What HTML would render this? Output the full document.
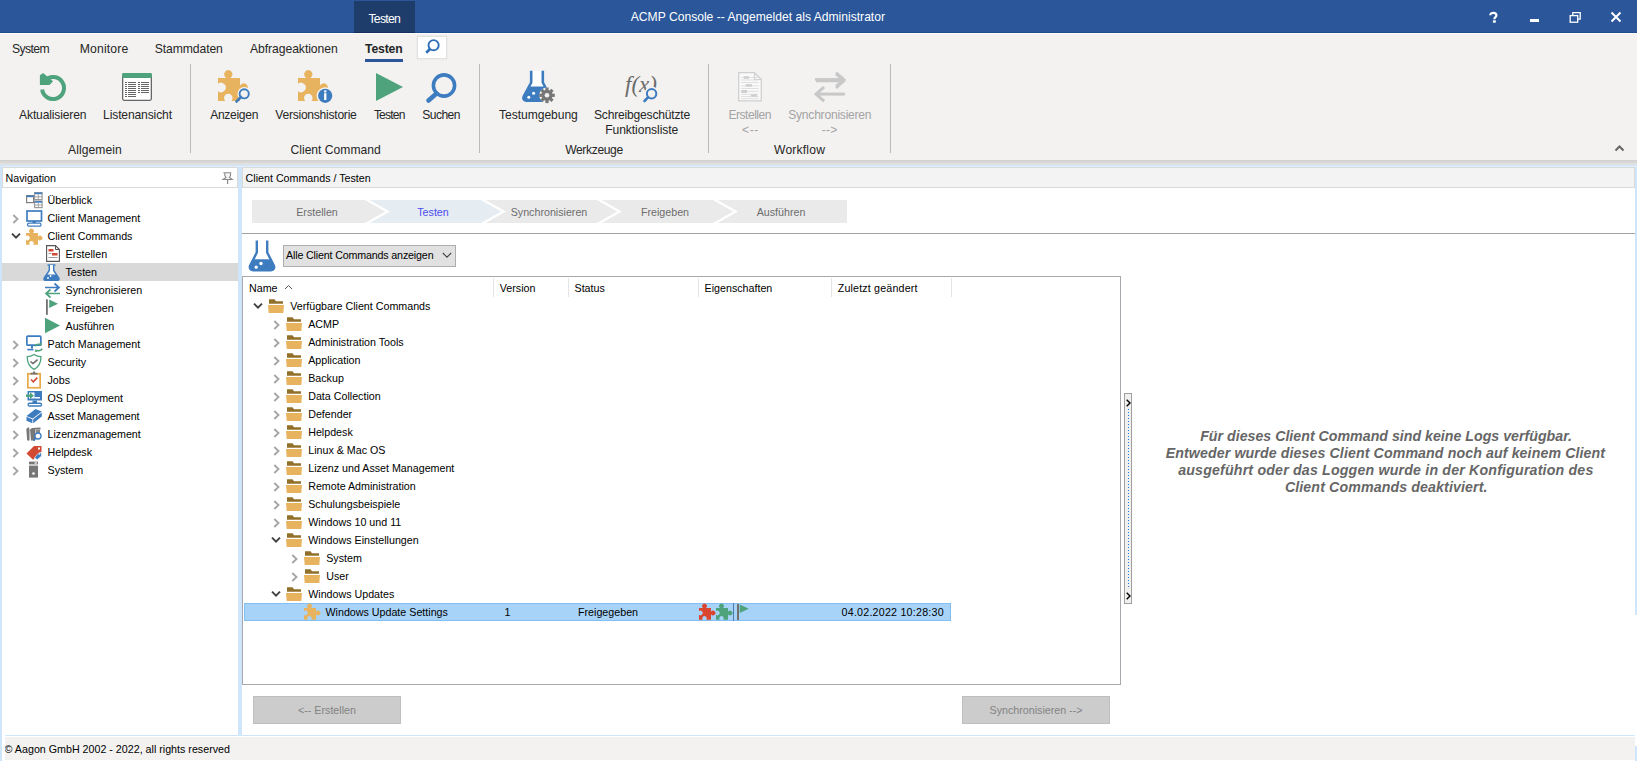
<!DOCTYPE html>
<html><head><meta charset="utf-8">
<style>
*{margin:0;padding:0;box-sizing:border-box}
html,body{width:1637px;height:761px;overflow:hidden;background:#fff;font-family:"Liberation Sans",sans-serif;color:#000}
.a{position:absolute}
svg.a{overflow:visible}
.t{position:absolute;white-space:nowrap;line-height:1}
</style></head><body>
<div class="a" style="left:0px;top:0px;width:1637px;height:33px;background:#2b579a"></div>
<div class="a" style="left:0px;top:32px;width:1637px;height:1px;background:#1f4c8e"></div>
<div class="a" style="left:354px;top:1px;width:61px;height:32px;background:#1f3d6b"></div>
<div class="a" style="left:354px;top:32px;width:61px;height:1px;background:#142f5c"></div>
<div class="t" style="left:368.40px;top:12.97px;font-size:12.2px;color:#fff;letter-spacing:-0.684px;">Testen</div>
<div class="t" style="left:630.80px;top:10.56px;font-size:12.1px;color:#fff;letter-spacing:0.008px;">ACMP Console -- Angemeldet als Administrator</div>
<svg class="a" style="left:1489px;top:12px" width="9" height="11" viewBox="0 0 9 11"><path d="M1.3 3.2C1.3 1.6 2.7 0.9 4.3 0.9C6.2 0.9 7.4 1.8 7.4 3.3C7.4 5.2 5.3 5.3 5.3 7.2" fill="none" stroke="#fff" stroke-width="2.2"/><rect x="3.9" y="8.3" width="2.9" height="2.4" fill="#fff"/></svg>
<div class="a" style="left:1530px;top:19px;width:9px;height:3px;background:#fff"></div>
<svg class="a" style="left:1569px;top:11px" width="13" height="12" viewBox="0 0 13 12"><rect x="1.2" y="4.6" width="7.5" height="6.6" fill="none" stroke="#fff" stroke-width="1.3"/><path d="M3.8 4.6V1.6H11.2V8.2H8.7" fill="none" stroke="#fff" stroke-width="1.3"/></svg>
<svg class="a" style="left:1610px;top:11px" width="12" height="12" viewBox="0 0 12 12"><path d="M1.5 1.5L10.5 10.5M10.5 1.5L1.5 10.5" stroke="#fff" stroke-width="2"/></svg>
<div class="a" style="left:0px;top:33px;width:1637px;height:127px;background:#f3f2f1"></div>
<div class="a" style="left:0px;top:33px;width:1637px;height:1px;background:#fdfdfb"></div>
<div class="a" style="left:0px;top:160px;width:1637px;height:5px;background:linear-gradient(#d0cfcd,#e4e4e4)"></div>
<div class="t" style="left:12.10px;top:43.27px;font-size:12.2px;color:#262626;letter-spacing:-0.628px;">System</div>
<div class="t" style="left:79.80px;top:43.27px;font-size:12.2px;color:#262626;letter-spacing:0.154px;">Monitore</div>
<div class="t" style="left:154.80px;top:43.27px;font-size:12.2px;color:#262626;letter-spacing:-0.112px;">Stammdaten</div>
<div class="t" style="left:249.90px;top:43.27px;font-size:12.2px;color:#262626;letter-spacing:-0.062px;">Abfrageaktionen</div>
<div class="t" style="left:365.10px;top:43.27px;font-size:12.2px;color:#262626;letter-spacing:-0.178px;font-weight:bold">Testen</div>
<div class="a" style="left:365px;top:59px;width:38px;height:3px;background:#2b579a"></div>
<div class="a" style="left:417px;top:35.5px;width:30px;height:23px;background:#fff;border:1px solid #e3e1df;box-shadow:0 0 1px #d8d6d4"></div>
<svg class="a" style="left:424px;top:38px" width="17" height="17" viewBox="0 0 17 17"><circle cx="9.6" cy="7.2" r="5.1" fill="none" stroke="#2f6fb5" stroke-width="1.9"/><path d="M6 11L2.2 14.8" stroke="#2f6fb5" stroke-width="2.7"/></svg>
<div class="a" style="left:190px;top:64px;width:1px;height:89px;background:#bdbbb8"></div>
<div class="a" style="left:479px;top:64px;width:1px;height:89px;background:#bdbbb8"></div>
<div class="a" style="left:708px;top:64px;width:1px;height:89px;background:#bdbbb8"></div>
<div class="a" style="left:890px;top:64px;width:1px;height:89px;background:#bdbbb8"></div>
<svg class="a" style="left:39px;top:72px" width="30" height="31" viewBox="0 0 30 31"><path d="M3.1 17.5A11 11 0 1 0 6.22 8.22" fill="none" stroke="#4ea37d" stroke-width="4"/><path d="M0.9 3.3L4.1 0.9L14 9.3L10.5 12.9L0.9 12.9Z" fill="#4ea37d"/></svg>
<svg class="a" style="left:122px;top:73px" width="30" height="28" viewBox="0 0 30 28"><rect x="0.65" y="0.65" width="28.7" height="26.7" rx="1.5" fill="#fff" stroke="#666" stroke-width="1.3"/><rect x="0" y="0" width="30" height="5" rx="1.5" fill="#4ea37d"/><rect x="3" y="9" width="2" height="1" fill="#666"/><rect x="6" y="9" width="8" height="1" fill="#666"/><rect x="3" y="11" width="2" height="1" fill="#666"/><rect x="6" y="11" width="8" height="1" fill="#666"/><rect x="3" y="13" width="2" height="1" fill="#666"/><rect x="6" y="13" width="8" height="1" fill="#666"/><rect x="3" y="15" width="2" height="1" fill="#666"/><rect x="6" y="15" width="8" height="1" fill="#666"/><rect x="3" y="17" width="2" height="1" fill="#666"/><rect x="6" y="17" width="8" height="1" fill="#666"/><rect x="3" y="19" width="2" height="1" fill="#666"/><rect x="6" y="19" width="8" height="1" fill="#666"/><rect x="3" y="21" width="2" height="1" fill="#666"/><rect x="6" y="21" width="8" height="1" fill="#666"/><rect x="3" y="23" width="2" height="1" fill="#666"/><rect x="6" y="23" width="8" height="1" fill="#666"/><rect x="16" y="9" width="2" height="1" fill="#666"/><rect x="19" y="9" width="8" height="1" fill="#666"/><rect x="16" y="11" width="2" height="1" fill="#666"/><rect x="19" y="11" width="8" height="1" fill="#666"/><rect x="16" y="13" width="2" height="1" fill="#666"/><rect x="19" y="13" width="8" height="1" fill="#666"/><rect x="16" y="15" width="2" height="1" fill="#666"/><rect x="19" y="15" width="8" height="1" fill="#666"/><rect x="16" y="17" width="2" height="1" fill="#666"/><rect x="19" y="17" width="8" height="1" fill="#666"/><rect x="16" y="19" width="2" height="1" fill="#666"/><rect x="19" y="19" width="8" height="1" fill="#666"/></svg>
<div class="t" style="left:19.10px;top:108.76px;font-size:12.1px;color:#262626;letter-spacing:-0.154px;">Aktualisieren</div>
<div class="t" style="left:103.10px;top:108.76px;font-size:12.1px;color:#262626;letter-spacing:-0.141px;">Listenansicht</div>
<div class="t" style="left:68.00px;top:143.56px;font-size:12.1px;color:#262626;letter-spacing:0.074px;">Allgemein</div>
<svg class="a" style="left:216px;top:70px" width="40" height="34" viewBox="0 0 40 34"><path d="M2 8H10.3A4.2 4.2 0 1 1 14.3 8H24V15.5A4.2 4.2 0 1 1 24 19.5V31H15.3A4.24 4.24 0 1 0 9.3 31H2V21.3A4.8 4.8 0 1 0 2 13.7Z" fill="#e8b35f"/><circle cx="28.2" cy="23.8" r="6.8" fill="#f3f2f1"/><circle cx="28.2" cy="23.8" r="4.6" fill="none" stroke="#3e7cc0" stroke-width="1.9"/><path d="M25 27L20.5 31.5" stroke="#3e7cc0" stroke-width="2.6" stroke-linecap="round"/></svg>
<div class="t" style="left:210.20px;top:108.76px;font-size:12.1px;color:#262626;letter-spacing:-0.320px;">Anzeigen</div>
<svg class="a" style="left:296px;top:70px" width="40" height="34" viewBox="0 0 40 34"><path d="M2 8H10.3A4.2 4.2 0 1 1 14.3 8H24V15.5A4.2 4.2 0 1 1 24 19.5V31H15.3A4.24 4.24 0 1 0 9.3 31H2V21.3A4.8 4.8 0 1 0 2 13.7Z" fill="#e8b35f"/><circle cx="29.2" cy="25.8" r="8.6" fill="#f3f2f1"/><circle cx="29.2" cy="25.8" r="7.1" fill="#3e7cc0"/><rect x="28.1" y="23.2" width="2.3" height="6.8" fill="#fff"/><rect x="28.1" y="20.4" width="2.3" height="2" fill="#fff"/></svg>
<div class="t" style="left:275.30px;top:108.76px;font-size:12.1px;color:#262626;letter-spacing:-0.258px;">Versionshistorie</div>
<svg class="a" style="left:376px;top:73px" width="28" height="28" viewBox="0 0 28 28"><path d="M0 0L27 14L0 28Z" fill="#4ea37d"/></svg>
<div class="t" style="left:373.90px;top:108.76px;font-size:12.1px;color:#262626;letter-spacing:-0.828px;">Testen</div>
<svg class="a" style="left:425px;top:71px" width="33" height="32" viewBox="0 0 33 32"><circle cx="19" cy="14.5" r="10.6" fill="none" stroke="#3e7cc0" stroke-width="3.6"/><path d="M11.5 22.5L3.5 29.5" stroke="#3e7cc0" stroke-width="4.6" stroke-linecap="round"/></svg>
<div class="t" style="left:422.30px;top:108.76px;font-size:12.1px;color:#262626;letter-spacing:-0.586px;">Suchen</div>
<div class="t" style="left:290.50px;top:143.56px;font-size:12.1px;color:#262626;letter-spacing:0.009px;">Client Command</div>
<svg class="a" style="left:520px;top:70px" width="38" height="34" viewBox="0 0 38 34"><path d="M11.2 0.8V12.5L3.8 26.3C2.9 28.3 4 30.6 6.2 30.6H27.8C30 30.6 31.1 28.3 30.2 26.3L22.8 12.5V0.8" fill="#fff" stroke="#3e7cc0" stroke-width="2.6"/><path d="M9.4 16.5H24.6L31.2 27C32 29 31 31.3 28.5 31.3H5.5C3 31.3 2 29 2.8 27Z" fill="#3e7cc0"/><circle cx="8.8" cy="27.2" r="1.5" fill="#fff"/><circle cx="13.6" cy="23.3" r="1.5" fill="#fff"/><g transform="translate(27,25.3)"><circle r="7.8" fill="#f3f2f1"/><circle r="5.6" fill="#777"/><circle r="2.3" fill="#f3f2f1"/><rect x="-1.6" y="-7.8" width="3.2" height="4" fill="#777" transform="rotate(0)"/><rect x="-1.6" y="-7.8" width="3.2" height="4" fill="#777" transform="rotate(45)"/><rect x="-1.6" y="-7.8" width="3.2" height="4" fill="#777" transform="rotate(90)"/><rect x="-1.6" y="-7.8" width="3.2" height="4" fill="#777" transform="rotate(135)"/><rect x="-1.6" y="-7.8" width="3.2" height="4" fill="#777" transform="rotate(180)"/><rect x="-1.6" y="-7.8" width="3.2" height="4" fill="#777" transform="rotate(225)"/><rect x="-1.6" y="-7.8" width="3.2" height="4" fill="#777" transform="rotate(270)"/><rect x="-1.6" y="-7.8" width="3.2" height="4" fill="#777" transform="rotate(315)"/></g></svg>
<div class="t" style="left:499.10px;top:108.76px;font-size:12.1px;color:#262626;letter-spacing:-0.059px;">Testumgebung</div>
<svg class="a" style="left:622px;top:70px" width="40" height="36" viewBox="0 0 40 36"><text x="3" y="21.5" font-family="Liberation Serif" font-style="italic" font-size="23" fill="#6b6b6b">f(x)</text><circle cx="29.6" cy="23.7" r="7.2" fill="#f3f2f1"/><circle cx="29.6" cy="23.7" r="4.7" fill="none" stroke="#3e7cc0" stroke-width="2"/><path d="M26.2 27.2L22.5 31" stroke="#3e7cc0" stroke-width="2.6" stroke-linecap="round"/></svg>
<div class="t" style="left:594.00px;top:108.76px;font-size:12.1px;color:#262626;letter-spacing:-0.206px;">Schreibgeschützte</div>
<div class="t" style="left:605.20px;top:123.56px;font-size:12.1px;color:#262626;letter-spacing:-0.066px;">Funktionsliste</div>
<div class="t" style="left:565.20px;top:143.56px;font-size:12.1px;color:#262626;letter-spacing:-0.369px;">Werkzeuge</div>
<svg class="a" style="left:738px;top:72px" width="24" height="30" viewBox="0 0 24 30"><path d="M0.7 0.7H16.5L23.3 7.5V28.8H0.7Z" fill="#f9f9f9" stroke="#d0d0d0" stroke-width="1.3"/><path d="M16.5 0.7V7.5H23.3" fill="none" stroke="#d0d0d0" stroke-width="1.2"/><rect x="3.2" y="5.0" width="17.4" height="0.8" fill="#dadada"/><rect x="3.2" y="7.6" width="17.4" height="0.8" fill="#dadada"/><rect x="3.2" y="10.2" width="17.4" height="0.8" fill="#dadada"/><rect x="3.2" y="13.4" width="17.4" height="0.8" fill="#dadada"/><rect x="3.2" y="16.0" width="17.4" height="0.8" fill="#dadada"/><rect x="3.2" y="18.9" width="17.4" height="0.8" fill="#dadada"/><rect x="3.2" y="21.8" width="17.4" height="0.8" fill="#dadada"/><rect x="3.2" y="24.1" width="17.4" height="0.8" fill="#dadada"/><rect x="3.2" y="26.3" width="17.4" height="0.8" fill="#dadada"/><rect x="5.8" y="4.2" width="5.2" height="2.5" fill="#cfcfcf"/><rect x="7.7" y="12.1" width="6.2" height="2.6" fill="#cfcfcf"/><rect x="3.2" y="18.0" width="5.8" height="2.9" fill="#cfcfcf"/><rect x="12.9" y="22.2" width="6.1" height="2.5" fill="#cfcfcf"/></svg>
<svg class="a" style="left:813px;top:70px" width="34" height="34" viewBox="0 0 34 34"><path d="M2 9.4H31M23 2.5L31 9.4L23 16.3M32 24.2H3M11 17.3L3 24.2L11 31.1" fill="none" stroke="#cbcbcb" stroke-width="2.8"/></svg>
<div class="t" style="left:728.40px;top:108.76px;font-size:12.1px;color:#a3a3a3;letter-spacing:-0.495px;">Erstellen</div>
<div class="t" style="left:741.90px;top:123.56px;font-size:12.1px;color:#a3a3a3;letter-spacing:0.688px;">&lt;--</div>
<svg class="a" style="left:813px;top:72px" width="34" height="30" viewBox="0 0 34 30"><path d="M3 9h28M23 2l8 7-8 7M31 22H3M11 15l-8 7 8 7" fill="none" stroke="#c8c8c8" stroke-width="2.5"/></svg>
<div class="t" style="left:788.20px;top:108.76px;font-size:12.1px;color:#a3a3a3;letter-spacing:-0.237px;">Synchronisieren</div>
<div class="t" style="left:821.70px;top:123.56px;font-size:12.1px;color:#a3a3a3;letter-spacing:0.287px;">--&gt;</div>
<div class="t" style="left:774.00px;top:143.56px;font-size:12.1px;color:#262626;letter-spacing:0.198px;">Workflow</div>
<svg class="a" style="left:1614px;top:144px" width="12" height="8" viewBox="0 0 12 8"><path d="M1.5 6.5L5.5 2.5L9.5 6.5" fill="none" stroke="#666" stroke-width="2"/></svg>
<div class="a" style="left:0px;top:165px;width:1637px;height:570px;background:#cfe6fa"></div>
<div class="a" style="left:0px;top:166px;width:1637px;height:1px;background:#e3f0fc"></div>
<div class="a" style="left:2px;top:167px;width:236px;height:568px;background:#fff"></div>
<div class="a" style="left:2px;top:167px;width:236px;height:21px;background:#fff;border:1px solid #d9d9d9"></div>
<div class="t" style="left:5.5px;top:172.74px;font-size:10.7px;color:#000;">Navigation</div>
<svg class="a" style="left:222px;top:172px" width="11" height="13" viewBox="0 0 11 13"><path d="M1.3 0.8H9.2M2.8 1V3.5L4 5.5L1 7.5H10.2L7.5 5.5L8.5 3.5V1" fill="#f4f4f4" stroke="#8a8a8a" stroke-width="1.1"/><path d="M5.6 7.5V12" stroke="#8a8a8a" stroke-width="1.2"/></svg>
<div class="a" style="left:242px;top:167px;width:1393px;height:568px;background:#fff"></div>
<div class="a" style="left:242px;top:167px;width:1393px;height:21px;background:#f3f3f3;border:1px solid #d9d9d9"></div>
<div class="t" style="left:245.6px;top:172.74px;font-size:10.7px;color:#000;">Client Commands / Testen</div>
<div class="a" style="left:2px;top:263px;width:236px;height:18px;background:#d9d9d9"></div>
<svg class="a" style="left:26px;top:192px" width="17" height="16" viewBox="0 0 17 16"><rect x="0.6" y="3.6" width="7" height="7" fill="none" stroke="#808080" stroke-width="1.2"/><rect x="0.6" y="3.6" width="7" height="1.6" fill="#3e7cc0"/><rect x="8.6" y="0.6" width="7.5" height="7" fill="#fff" stroke="#9a9a9a" stroke-width="1.2"/><rect x="8.6" y="0.6" width="7.5" height="1.6" fill="#3e7cc0"/><path d="M12.3 2v5.5M9 4.8h7" stroke="#9a9a9a" stroke-width="0.9"/><rect x="8.6" y="9.1" width="7.5" height="6.5" fill="#fff" stroke="#9a9a9a" stroke-width="1.2"/><rect x="8.6" y="9.1" width="7.5" height="1.6" fill="#3e7cc0"/><path d="M12.3 10.5v5M9 13h7" stroke="#9a9a9a" stroke-width="0.9"/></svg>
<div class="t" style="left:47.5px;top:194.94px;font-size:10.7px;color:#000;">Überblick</div>
<svg class="a" style="left:12px;top:214px" width="7" height="10" viewBox="0 0 7 10"><path d="M1.3 1L5.5 5L1.3 9" fill="none" stroke="#a6a6a6" stroke-width="1.9"/></svg>
<svg class="a" style="left:26px;top:210px" width="17" height="17" viewBox="0 0 17 17"><rect x="1" y="1" width="14.5" height="10" fill="none" stroke="#3e7cc0" stroke-width="1.7"/><rect x="6.5" y="11" width="3.5" height="2" fill="#3e7cc0"/><rect x="1.6" y="13.2" width="13.3" height="3" rx="1" fill="none" stroke="#3e7cc0" stroke-width="1.2"/></svg>
<div class="t" style="left:47.5px;top:212.94px;font-size:10.7px;color:#000;">Client Management</div>
<svg class="a" style="left:11px;top:233px" width="10" height="7" viewBox="0 0 10 7"><path d="M1 0.6L5 4.6L9 0.6" fill="none" stroke="#404040" stroke-width="1.9"/></svg>
<svg class="a" style="left:26px;top:229px" width="17" height="17" viewBox="0 0 17 17"><path d="M0 4H4.2A2.39 2.39 0 1 1 6.8 4H12V7.7A2.39 2.39 0 1 1 12 10.3V15.8H7.2A2.27 2.27 0 1 0 3.8 15.8H0V10.7A2.27 2.27 0 1 0 0 7.3Z" fill="#e8b35f"/></svg>
<div class="t" style="left:47.5px;top:230.94px;font-size:10.7px;color:#000;">Client Commands</div>
<svg class="a" style="left:46px;top:245px" width="14" height="17" viewBox="0 0 14 17"><path d="M0.6 0.6H9.5L13.4 4.5V16.4H0.6Z" fill="#fff" stroke="#555" stroke-width="1.1"/><path d="M9.5 0.6V4.5H13.4" fill="none" stroke="#555" stroke-width="1"/><rect x="2.5" y="4" width="5" height="2.5" fill="#d24a33"/><rect x="2.5" y="8" width="3" height="1" fill="#999"/><rect x="6" y="8" width="5.5" height="2.5" fill="#d24a33"/><rect x="2.5" y="12" width="9" height="1" fill="#999"/></svg>
<div class="t" style="left:65.5px;top:248.94px;font-size:10.7px;color:#000;">Erstellen</div>
<svg class="a" style="left:43px;top:264px" width="17" height="17" viewBox="0 0 17 17"><path d="M4.5 1H12.5" stroke="#3e7cc0" stroke-width="1.4"/><path d="M6.3 1V6.5L1.2 14.2C0.6 15.3 1.2 16.2 2.3 16.2H14.7C15.8 16.2 16.4 15.3 15.8 14.2L10.7 6.5V1" fill="#fff" stroke="#3e7cc0" stroke-width="1.5"/><path d="M3.2 10.5H13.8L16 14.4C16.3 15.5 15.8 16.4 14.7 16.4H2.3C1.2 16.4 .7 15.5 1 14.4Z" fill="#3e7cc0"/><circle cx="5" cy="14" r="0.9" fill="#fff"/><circle cx="7.6" cy="12" r="0.9" fill="#fff"/></svg>
<div class="t" style="left:65.5px;top:266.94px;font-size:10.7px;color:#000;">Testen</div>
<svg class="a" style="left:44px;top:282px" width="17" height="16" viewBox="0 0 17 16"><path d="M1 5.5H15M10.5 1.5L15 5.5L10.5 9.5" fill="none" stroke="#3e7cc0" stroke-width="1.7"/><path d="M16 11.5H2M6.5 7.5L2 11.5L6.5 15.5" fill="none" stroke="#4ea37d" stroke-width="1.7"/></svg>
<div class="t" style="left:65.5px;top:284.94px;font-size:10.7px;color:#000;">Synchronisieren</div>
<svg class="a" style="left:45px;top:299px" width="14" height="18" viewBox="0 0 14 18"><rect x="1" y="0.3" width="1.8" height="15.5" fill="#707070"/><path d="M4.2 0.6L13 4.8L4.2 9Z" fill="#4ea37d"/></svg>
<div class="t" style="left:65.5px;top:302.94px;font-size:10.7px;color:#000;">Freigeben</div>
<svg class="a" style="left:45px;top:318px" width="16" height="16" viewBox="0 0 16 16"><path d="M0 -0.2L15 7.5L0 15.2Z" fill="#4ea37d"/></svg>
<div class="t" style="left:65.5px;top:320.94px;font-size:10.7px;color:#000;">Ausführen</div>
<svg class="a" style="left:12px;top:340px" width="7" height="10" viewBox="0 0 7 10"><path d="M1.3 1L5.5 5L1.3 9" fill="none" stroke="#a6a6a6" stroke-width="1.9"/></svg>
<svg class="a" style="left:26px;top:335px" width="17" height="18" viewBox="0 0 17 18"><rect x="0.85" y="1.05" width="14" height="9.1" rx="1" fill="none" stroke="#3e7cc0" stroke-width="1.7"/><rect x="5" y="10.5" width="2" height="3" fill="#3e7cc0"/><path d="M1.3 14.6H7.5" stroke="#3e7cc0" stroke-width="1.6"/><path d="M8.6 11.3C9.5 9.5 12.5 8.6 14.6 9.8" fill="none" stroke="#4ea37d" stroke-width="1.5"/><path d="M13.2 7.8L16 8.2L15.3 11Z" fill="#4ea37d"/><path d="M16.2 13.6C15.3 15.4 12.3 16.3 10.2 15.1" fill="none" stroke="#4ea37d" stroke-width="1.5"/><path d="M11.6 17.1L8.8 16.7L9.5 13.9Z" fill="#4ea37d"/></svg>
<div class="t" style="left:47.5px;top:338.94px;font-size:10.7px;color:#000;">Patch Management</div>
<svg class="a" style="left:12px;top:358px" width="7" height="10" viewBox="0 0 7 10"><path d="M1.3 1L5.5 5L1.3 9" fill="none" stroke="#a6a6a6" stroke-width="1.9"/></svg>
<svg class="a" style="left:26px;top:353px" width="17" height="18" viewBox="0 0 17 18"><path d="M8.1 1.5C10 2.8 12.4 3.6 15 3.6C15 10.5 12.5 14.2 8.1 16.4C3.7 14.2 1.2 10.5 1.2 3.6C3.8 3.6 6.2 2.8 8.1 1.5Z" fill="#fff" stroke="#4ea37d" stroke-width="1.3"/><path d="M4.5 8.5L7 10.6L11.5 6.6" fill="none" stroke="#666" stroke-width="1.5"/></svg>
<div class="t" style="left:47.5px;top:356.94px;font-size:10.7px;color:#000;">Security</div>
<svg class="a" style="left:12px;top:376px" width="7" height="10" viewBox="0 0 7 10"><path d="M1.3 1L5.5 5L1.3 9" fill="none" stroke="#a6a6a6" stroke-width="1.9"/></svg>
<svg class="a" style="left:26px;top:371px" width="17" height="18" viewBox="0 0 17 18"><rect x="1.85" y="2.75" width="12.3" height="14" fill="#fff" stroke="#e8a94a" stroke-width="1.7"/><path d="M4 3.5L5 1.8H11L12 3.5Z" fill="#777"/><rect x="7" y="0.5" width="2" height="1.6" fill="#777"/><path d="M5 8.5L7.3 10.8L11.3 6.6" fill="none" stroke="#d24a33" stroke-width="1.6"/></svg>
<div class="t" style="left:47.5px;top:374.94px;font-size:10.7px;color:#000;">Jobs</div>
<svg class="a" style="left:12px;top:394px" width="7" height="10" viewBox="0 0 7 10"><path d="M1.3 1L5.5 5L1.3 9" fill="none" stroke="#a6a6a6" stroke-width="1.9"/></svg>
<svg class="a" style="left:26px;top:390px" width="17" height="17" viewBox="0 0 17 17"><path d="M1.5 1H16V10.5H1.5Z" fill="#3e7cc0"/><rect x="3" y="2.5" width="5.5" height="6" fill="#fff"/><rect x="8.5" y="7" width="5.5" height="1.5" fill="#fff"/><rect x="6.5" y="10.5" width="4.5" height="3" fill="#3e7cc0"/><rect x="2.2" y="13.2" width="13.3" height="2.8" rx="1.2" fill="#fff" stroke="#3e7cc0" stroke-width="1.4"/><path d="M0 5.7H5" stroke="#4ea37d" stroke-width="2.5"/><path d="M4 2.3L8 5.7L4 9.1Z" fill="#4ea37d"/></svg>
<div class="t" style="left:47.5px;top:392.94px;font-size:10.7px;color:#000;">OS Deployment</div>
<svg class="a" style="left:12px;top:412px" width="7" height="10" viewBox="0 0 7 10"><path d="M1.3 1L5.5 5L1.3 9" fill="none" stroke="#a6a6a6" stroke-width="1.9"/></svg>
<svg class="a" style="left:26px;top:408px" width="17" height="17" viewBox="0 0 17 17"><path d="M0.5 8L9.5 1L15.8 3.6L6.8 10.6Z" fill="#3e7cc0"/><path d="M0.5 8.8L6.4 11.3V15.3L0.5 12.8Z" fill="#3e7cc0"/><path d="M7.2 11.2L15.8 4.4V8.4L7.2 15.3Z" fill="#3e7cc0"/></svg>
<div class="t" style="left:47.5px;top:410.94px;font-size:10.7px;color:#000;">Asset Management</div>
<svg class="a" style="left:12px;top:430px" width="7" height="10" viewBox="0 0 7 10"><path d="M1.3 1L5.5 5L1.3 9" fill="none" stroke="#a6a6a6" stroke-width="1.9"/></svg>
<svg class="a" style="left:26px;top:426px" width="17" height="17" viewBox="0 0 17 17"><path d="M0.3 3L2.3 1L3.5 3V14.5H1.2Z" fill="#777"/><path d="M4 3.5L6 2L14.5 1.5V3.5L9 3.6V14.5H5Z" fill="#777"/><path d="M9.5 3.6H14V7H9.5Z" fill="#8a8a8a"/><circle cx="12" cy="10" r="3" fill="#fff" stroke="#3e7cc0" stroke-width="1.3"/><path d="M9.7 12.3L7.7 14.8" stroke="#3e7cc0" stroke-width="1.6"/></svg>
<div class="t" style="left:47.5px;top:428.94px;font-size:10.7px;color:#000;">Lizenzmanagement</div>
<svg class="a" style="left:12px;top:448px" width="7" height="10" viewBox="0 0 7 10"><path d="M1.3 1L5.5 5L1.3 9" fill="none" stroke="#a6a6a6" stroke-width="1.9"/></svg>
<svg class="a" style="left:26px;top:444px" width="17" height="17" viewBox="0 0 17 17"><path d="M0.5 9.5L8 2H15.5V7.5L7 15.8Z" fill="#d24a33"/><rect x="12" y="3.5" width="2" height="2" fill="#fff"/><path d="M8.5 13.5L13.2 8.5L15.5 9V12L11.3 15.8Z" fill="#3e7cc0" stroke="#fff" stroke-width="0.6"/><circle cx="13.5" cy="10" r="0.8" fill="#fff"/></svg>
<div class="t" style="left:47.5px;top:446.94px;font-size:10.7px;color:#000;">Helpdesk</div>
<svg class="a" style="left:12px;top:466px" width="7" height="10" viewBox="0 0 7 10"><path d="M1.3 1L5.5 5L1.3 9" fill="none" stroke="#a6a6a6" stroke-width="1.9"/></svg>
<svg class="a" style="left:28px;top:461px" width="14" height="18" viewBox="0 0 14 18"><rect x="1" y="0.6" width="9" height="2.8" fill="#777"/><rect x="6.5" y="1.4" width="2.5" height="1.2" fill="#fff"/><rect x="1" y="4.6" width="9" height="12" fill="#777"/><circle cx="5.5" cy="12.5" r="1.3" fill="#fff"/></svg>
<div class="t" style="left:47.5px;top:464.94px;font-size:10.7px;color:#000;">System</div>
<svg class="a" style="left:252px;top:200px" width="595" height="23" viewBox="0 0 595 23"><rect x="0" y="0" width="595" height="23" fill="#eaeaea"/><path d="M113 0H229L249.5 11.5L229 23H113L133.5 11.5Z" fill="#e5edf3"/><path d="M113 -1.2L135.65 11.5L113 24.2" fill="none" stroke="#fff" stroke-width="2.2"/><path d="M229 -1.2L251.65 11.5L229 24.2" fill="none" stroke="#fff" stroke-width="2.2"/><path d="M345 -1.2L367.65 11.5L345 24.2" fill="none" stroke="#fff" stroke-width="2.2"/><path d="M461 -1.2L483.65 11.5L461 24.2" fill="none" stroke="#fff" stroke-width="2.2"/></svg>
<div class="a" style="left:252px;top:197px;width:600px;height:3px;background:#fff"></div>
<div class="a" style="left:252px;top:223px;width:600px;height:3px;background:#fff"></div>
<div class="t" style="left:-183px;width:1000px;text-align:center;top:206.94px;font-size:10.7px;color:#6d6d6d;">Erstellen</div>
<div class="t" style="left:-67px;width:1000px;text-align:center;top:206.94px;font-size:10.7px;color:#4b4bef;">Testen</div>
<div class="t" style="left:49px;width:1000px;text-align:center;top:206.94px;font-size:10.7px;color:#6d6d6d;">Synchronisieren</div>
<div class="t" style="left:165px;width:1000px;text-align:center;top:206.94px;font-size:10.7px;color:#6d6d6d;">Freigeben</div>
<div class="t" style="left:281px;width:1000px;text-align:center;top:206.94px;font-size:10.7px;color:#6d6d6d;">Ausführen</div>
<div class="a" style="left:242px;top:233px;width:1393px;height:1px;background:#a0a0a0"></div>
<svg class="a" style="left:248px;top:240px" width="29" height="32" viewBox="0 0 29 32"><path d="M8.8 0.5V12.5L2.2 25.5C1.2 27.8 2.3 30.2 5 30.2H23C25.7 30.2 26.8 27.8 25.8 25.5L19.2 12.5V0.5" fill="#fff" stroke="#3e7cc0" stroke-width="2.4"/><path d="M5.6 19.3H22.4L26.6 26C27.6 28.5 26.2 30.8 23.5 30.8H4.5C1.8 30.8 .4 28.5 1.4 26Z" fill="#3e7cc0"/><circle cx="8.2" cy="27.2" r="1.6" fill="#fff"/><circle cx="13" cy="23.5" r="1.7" fill="#fff"/></svg>
<div class="a" style="left:283px;top:245px;width:173px;height:22px;background:#e1e1e1;border:1px solid #adadad"></div>
<div class="t" style="left:286px;top:250.44px;font-size:10.7px;color:#000;letter-spacing:-0.16px">Alle Client Commands anzeigen</div>
<svg class="a" style="left:442px;top:252px" width="10" height="8" viewBox="0 0 10 8"><path d="M0.8 1L5 5.2L9.2 1" fill="none" stroke="#444" stroke-width="1.1"/></svg>
<div class="a" style="left:242px;top:276px;width:879px;height:409px;background:#fff;border:1px solid #a7a7ad"></div>
<div class="a" style="left:493px;top:278px;width:1px;height:19px;background:#e5e5e5"></div>
<div class="a" style="left:568px;top:278px;width:1px;height:19px;background:#e5e5e5"></div>
<div class="a" style="left:698px;top:278px;width:1px;height:19px;background:#e5e5e5"></div>
<div class="a" style="left:831px;top:278px;width:1px;height:19px;background:#e5e5e5"></div>
<div class="a" style="left:951px;top:278px;width:1px;height:19px;background:#e5e5e5"></div>
<div class="t" style="left:249px;top:282.74px;font-size:10.7px;color:#000;">Name</div>
<svg class="a" style="left:284px;top:284px" width="9" height="6" viewBox="0 0 9 6"><path d="M1 5L4.5 1.5L8 5" fill="none" stroke="#555" stroke-width="1"/></svg>
<div class="t" style="left:499.8px;top:282.74px;font-size:10.7px;color:#000;">Version</div>
<div class="t" style="left:574.5px;top:282.74px;font-size:10.7px;color:#000;">Status</div>
<div class="t" style="left:704.60px;top:282.74px;font-size:10.7px;color:#000;letter-spacing:-0.004px;">Eigenschaften</div>
<div class="t" style="left:837.70px;top:282.74px;font-size:10.7px;color:#000;letter-spacing:0.171px;">Zuletzt geändert</div>
<div class="a" style="left:244px;top:603px;width:707px;height:18px;background:#a8d3f9;border:1px solid #83bff2"></div>
<svg class="a" style="left:253px;top:303px" width="10" height="7" viewBox="0 0 10 7"><path d="M1 0.6L5 4.6L9 0.6" fill="none" stroke="#404040" stroke-width="1.9"/></svg>
<svg class="a" style="left:268px;top:299px" width="16" height="14" viewBox="0 0 16 14"><path d="M1 0.3H6.5L8 2.3H15V4.8H1Z" fill="#93702a"/><path d="M0 6H16L15.3 14H0.7Z" fill="#e8b35f"/></svg>
<div class="t" style="left:290.2px;top:301.04px;font-size:10.7px;color:#000;">Verfügbare Client Commands</div>
<svg class="a" style="left:273px;top:320px" width="7" height="10" viewBox="0 0 7 10"><path d="M1.3 1L5.5 5L1.3 9" fill="none" stroke="#a6a6a6" stroke-width="1.9"/></svg>
<svg class="a" style="left:286px;top:317px" width="16" height="14" viewBox="0 0 16 14"><path d="M1 0.3H6.5L8 2.3H15V4.8H1Z" fill="#93702a"/><path d="M0 6H16L15.3 14H0.7Z" fill="#e8b35f"/></svg>
<div class="t" style="left:308.2px;top:319.04px;font-size:10.7px;color:#000;">ACMP</div>
<svg class="a" style="left:273px;top:338px" width="7" height="10" viewBox="0 0 7 10"><path d="M1.3 1L5.5 5L1.3 9" fill="none" stroke="#a6a6a6" stroke-width="1.9"/></svg>
<svg class="a" style="left:286px;top:335px" width="16" height="14" viewBox="0 0 16 14"><path d="M1 0.3H6.5L8 2.3H15V4.8H1Z" fill="#93702a"/><path d="M0 6H16L15.3 14H0.7Z" fill="#e8b35f"/></svg>
<div class="t" style="left:308.2px;top:337.04px;font-size:10.7px;color:#000;">Administration Tools</div>
<svg class="a" style="left:273px;top:356px" width="7" height="10" viewBox="0 0 7 10"><path d="M1.3 1L5.5 5L1.3 9" fill="none" stroke="#a6a6a6" stroke-width="1.9"/></svg>
<svg class="a" style="left:286px;top:353px" width="16" height="14" viewBox="0 0 16 14"><path d="M1 0.3H6.5L8 2.3H15V4.8H1Z" fill="#93702a"/><path d="M0 6H16L15.3 14H0.7Z" fill="#e8b35f"/></svg>
<div class="t" style="left:308.2px;top:355.04px;font-size:10.7px;color:#000;">Application</div>
<svg class="a" style="left:273px;top:374px" width="7" height="10" viewBox="0 0 7 10"><path d="M1.3 1L5.5 5L1.3 9" fill="none" stroke="#a6a6a6" stroke-width="1.9"/></svg>
<svg class="a" style="left:286px;top:371px" width="16" height="14" viewBox="0 0 16 14"><path d="M1 0.3H6.5L8 2.3H15V4.8H1Z" fill="#93702a"/><path d="M0 6H16L15.3 14H0.7Z" fill="#e8b35f"/></svg>
<div class="t" style="left:308.2px;top:373.04px;font-size:10.7px;color:#000;">Backup</div>
<svg class="a" style="left:273px;top:392px" width="7" height="10" viewBox="0 0 7 10"><path d="M1.3 1L5.5 5L1.3 9" fill="none" stroke="#a6a6a6" stroke-width="1.9"/></svg>
<svg class="a" style="left:286px;top:389px" width="16" height="14" viewBox="0 0 16 14"><path d="M1 0.3H6.5L8 2.3H15V4.8H1Z" fill="#93702a"/><path d="M0 6H16L15.3 14H0.7Z" fill="#e8b35f"/></svg>
<div class="t" style="left:308.2px;top:391.04px;font-size:10.7px;color:#000;">Data Collection</div>
<svg class="a" style="left:273px;top:410px" width="7" height="10" viewBox="0 0 7 10"><path d="M1.3 1L5.5 5L1.3 9" fill="none" stroke="#a6a6a6" stroke-width="1.9"/></svg>
<svg class="a" style="left:286px;top:407px" width="16" height="14" viewBox="0 0 16 14"><path d="M1 0.3H6.5L8 2.3H15V4.8H1Z" fill="#93702a"/><path d="M0 6H16L15.3 14H0.7Z" fill="#e8b35f"/></svg>
<div class="t" style="left:308.2px;top:409.04px;font-size:10.7px;color:#000;">Defender</div>
<svg class="a" style="left:273px;top:428px" width="7" height="10" viewBox="0 0 7 10"><path d="M1.3 1L5.5 5L1.3 9" fill="none" stroke="#a6a6a6" stroke-width="1.9"/></svg>
<svg class="a" style="left:286px;top:425px" width="16" height="14" viewBox="0 0 16 14"><path d="M1 0.3H6.5L8 2.3H15V4.8H1Z" fill="#93702a"/><path d="M0 6H16L15.3 14H0.7Z" fill="#e8b35f"/></svg>
<div class="t" style="left:308.2px;top:427.04px;font-size:10.7px;color:#000;">Helpdesk</div>
<svg class="a" style="left:273px;top:446px" width="7" height="10" viewBox="0 0 7 10"><path d="M1.3 1L5.5 5L1.3 9" fill="none" stroke="#a6a6a6" stroke-width="1.9"/></svg>
<svg class="a" style="left:286px;top:443px" width="16" height="14" viewBox="0 0 16 14"><path d="M1 0.3H6.5L8 2.3H15V4.8H1Z" fill="#93702a"/><path d="M0 6H16L15.3 14H0.7Z" fill="#e8b35f"/></svg>
<div class="t" style="left:308.2px;top:445.04px;font-size:10.7px;color:#000;">Linux &amp; Mac OS</div>
<svg class="a" style="left:273px;top:464px" width="7" height="10" viewBox="0 0 7 10"><path d="M1.3 1L5.5 5L1.3 9" fill="none" stroke="#a6a6a6" stroke-width="1.9"/></svg>
<svg class="a" style="left:286px;top:461px" width="16" height="14" viewBox="0 0 16 14"><path d="M1 0.3H6.5L8 2.3H15V4.8H1Z" fill="#93702a"/><path d="M0 6H16L15.3 14H0.7Z" fill="#e8b35f"/></svg>
<div class="t" style="left:308.2px;top:463.04px;font-size:10.7px;color:#000;">Lizenz und Asset Management</div>
<svg class="a" style="left:273px;top:482px" width="7" height="10" viewBox="0 0 7 10"><path d="M1.3 1L5.5 5L1.3 9" fill="none" stroke="#a6a6a6" stroke-width="1.9"/></svg>
<svg class="a" style="left:286px;top:479px" width="16" height="14" viewBox="0 0 16 14"><path d="M1 0.3H6.5L8 2.3H15V4.8H1Z" fill="#93702a"/><path d="M0 6H16L15.3 14H0.7Z" fill="#e8b35f"/></svg>
<div class="t" style="left:308.2px;top:481.04px;font-size:10.7px;color:#000;">Remote Administration</div>
<svg class="a" style="left:273px;top:500px" width="7" height="10" viewBox="0 0 7 10"><path d="M1.3 1L5.5 5L1.3 9" fill="none" stroke="#a6a6a6" stroke-width="1.9"/></svg>
<svg class="a" style="left:286px;top:497px" width="16" height="14" viewBox="0 0 16 14"><path d="M1 0.3H6.5L8 2.3H15V4.8H1Z" fill="#93702a"/><path d="M0 6H16L15.3 14H0.7Z" fill="#e8b35f"/></svg>
<div class="t" style="left:308.2px;top:499.04px;font-size:10.7px;color:#000;">Schulungsbeispiele</div>
<svg class="a" style="left:273px;top:518px" width="7" height="10" viewBox="0 0 7 10"><path d="M1.3 1L5.5 5L1.3 9" fill="none" stroke="#a6a6a6" stroke-width="1.9"/></svg>
<svg class="a" style="left:286px;top:515px" width="16" height="14" viewBox="0 0 16 14"><path d="M1 0.3H6.5L8 2.3H15V4.8H1Z" fill="#93702a"/><path d="M0 6H16L15.3 14H0.7Z" fill="#e8b35f"/></svg>
<div class="t" style="left:308.2px;top:517.04px;font-size:10.7px;color:#000;">Windows 10 und 11</div>
<svg class="a" style="left:271px;top:537px" width="10" height="7" viewBox="0 0 10 7"><path d="M1 0.6L5 4.6L9 0.6" fill="none" stroke="#404040" stroke-width="1.9"/></svg>
<svg class="a" style="left:286px;top:533px" width="16" height="14" viewBox="0 0 16 14"><path d="M1 0.3H6.5L8 2.3H15V4.8H1Z" fill="#93702a"/><path d="M0 6H16L15.3 14H0.7Z" fill="#e8b35f"/></svg>
<div class="t" style="left:308.2px;top:535.04px;font-size:10.7px;color:#000;">Windows Einstellungen</div>
<svg class="a" style="left:291px;top:554px" width="7" height="10" viewBox="0 0 7 10"><path d="M1.3 1L5.5 5L1.3 9" fill="none" stroke="#a6a6a6" stroke-width="1.9"/></svg>
<svg class="a" style="left:304px;top:551px" width="16" height="14" viewBox="0 0 16 14"><path d="M1 0.3H6.5L8 2.3H15V4.8H1Z" fill="#93702a"/><path d="M0 6H16L15.3 14H0.7Z" fill="#e8b35f"/></svg>
<div class="t" style="left:326.2px;top:553.04px;font-size:10.7px;color:#000;">System</div>
<svg class="a" style="left:291px;top:572px" width="7" height="10" viewBox="0 0 7 10"><path d="M1.3 1L5.5 5L1.3 9" fill="none" stroke="#a6a6a6" stroke-width="1.9"/></svg>
<svg class="a" style="left:304px;top:569px" width="16" height="14" viewBox="0 0 16 14"><path d="M1 0.3H6.5L8 2.3H15V4.8H1Z" fill="#93702a"/><path d="M0 6H16L15.3 14H0.7Z" fill="#e8b35f"/></svg>
<div class="t" style="left:326.2px;top:571.04px;font-size:10.7px;color:#000;">User</div>
<svg class="a" style="left:271px;top:591px" width="10" height="7" viewBox="0 0 10 7"><path d="M1 0.6L5 4.6L9 0.6" fill="none" stroke="#404040" stroke-width="1.9"/></svg>
<svg class="a" style="left:286px;top:587px" width="16" height="14" viewBox="0 0 16 14"><path d="M1 0.3H6.5L8 2.3H15V4.8H1Z" fill="#93702a"/><path d="M0 6H16L15.3 14H0.7Z" fill="#e8b35f"/></svg>
<div class="t" style="left:308.2px;top:589.04px;font-size:10.7px;color:#000;">Windows Updates</div>
<svg class="a" style="left:304px;top:604px" width="17" height="17" viewBox="0 0 17 17"><path d="M0 4H4.2A2.39 2.39 0 1 1 6.8 4H12V7.7A2.39 2.39 0 1 1 12 10.3V15.8H7.2A2.27 2.27 0 1 0 3.8 15.8H0V10.7A2.27 2.27 0 1 0 0 7.3Z" fill="#e8b35f"/></svg>
<div class="t" style="left:325.5px;top:607.04px;font-size:10.7px;color:#000;">Windows Update Settings</div>
<div class="t" style="left:504.5px;top:607.04px;font-size:10.7px;color:#000;">1</div>
<div class="t" style="left:578px;top:607.04px;font-size:10.7px;color:#000;">Freigegeben</div>
<svg class="a" style="left:699px;top:604px" width="17" height="17" viewBox="0 0 17 17"><path d="M0 4H4.2A2.39 2.39 0 1 1 6.8 4H12V7.7A2.39 2.39 0 1 1 12 10.3V15.8H7.2A2.27 2.27 0 1 0 3.8 15.8H0V10.7A2.27 2.27 0 1 0 0 7.3Z" fill="#d9452f"/></svg>
<svg class="a" style="left:716px;top:604px" width="17" height="17" viewBox="0 0 17 17"><path d="M0 4H4.2A2.39 2.39 0 1 1 6.8 4H12V7.7A2.39 2.39 0 1 1 12 10.3V15.8H7.2A2.27 2.27 0 1 0 3.8 15.8H0V10.7A2.27 2.27 0 1 0 0 7.3Z" fill="#4ea37d"/></svg>
<div class="a" style="left:733px;top:603px;width:1px;height:18px;background:#4a7ab0"></div>
<div class="a" style="left:737px;top:604px;width:1.7px;height:16px;background:#707070"></div>
<svg class="a" style="left:739px;top:604px" width="12" height="10" viewBox="0 0 12 10"><path d="M0.7 0.4L9.8 4.7L0.7 9Z" fill="#4ea37d"/></svg>
<div class="t" style="left:841.60px;top:607.04px;font-size:10.7px;color:#000;letter-spacing:0.219px;">04.02.2022 10:28:30</div>
<div class="a" style="left:1124px;top:393px;width:8px;height:211px;background:#f0f0f0;border:1px solid #a0a0a0"></div>
<svg class="a" style="left:1126px;top:399px" width="5" height="8" viewBox="0 0 5 8"><path d="M0.7 0.7L4 4L0.7 7.3" fill="none" stroke="#000" stroke-width="1.4"/></svg>
<svg class="a" style="left:1126px;top:592px" width="5" height="8" viewBox="0 0 5 8"><path d="M0.7 0.7L4 4L0.7 7.3" fill="none" stroke="#000" stroke-width="1.4"/></svg>
<svg class="a" style="left:1127px;top:409px" width="3" height="180" viewBox="0 0 3 180"><rect x="1" y="0" width="1" height="1" fill="#1e7ae6"/><rect x="1" y="3" width="1" height="1" fill="#1e7ae6"/><rect x="1" y="6" width="1" height="1" fill="#1e7ae6"/><rect x="1" y="9" width="1" height="1" fill="#1e7ae6"/><rect x="1" y="12" width="1" height="1" fill="#1e7ae6"/><rect x="1" y="15" width="1" height="1" fill="#1e7ae6"/><rect x="1" y="18" width="1" height="1" fill="#1e7ae6"/><rect x="1" y="21" width="1" height="1" fill="#1e7ae6"/><rect x="1" y="24" width="1" height="1" fill="#1e7ae6"/><rect x="1" y="27" width="1" height="1" fill="#1e7ae6"/><rect x="1" y="30" width="1" height="1" fill="#1e7ae6"/><rect x="1" y="33" width="1" height="1" fill="#1e7ae6"/><rect x="1" y="36" width="1" height="1" fill="#1e7ae6"/><rect x="1" y="39" width="1" height="1" fill="#1e7ae6"/><rect x="1" y="42" width="1" height="1" fill="#1e7ae6"/><rect x="1" y="45" width="1" height="1" fill="#1e7ae6"/><rect x="1" y="48" width="1" height="1" fill="#1e7ae6"/><rect x="1" y="51" width="1" height="1" fill="#1e7ae6"/><rect x="1" y="54" width="1" height="1" fill="#1e7ae6"/><rect x="1" y="57" width="1" height="1" fill="#1e7ae6"/><rect x="1" y="60" width="1" height="1" fill="#1e7ae6"/><rect x="1" y="63" width="1" height="1" fill="#1e7ae6"/><rect x="1" y="66" width="1" height="1" fill="#1e7ae6"/><rect x="1" y="69" width="1" height="1" fill="#1e7ae6"/><rect x="1" y="72" width="1" height="1" fill="#1e7ae6"/><rect x="1" y="75" width="1" height="1" fill="#1e7ae6"/><rect x="1" y="78" width="1" height="1" fill="#1e7ae6"/><rect x="1" y="81" width="1" height="1" fill="#1e7ae6"/><rect x="1" y="84" width="1" height="1" fill="#1e7ae6"/><rect x="1" y="87" width="1" height="1" fill="#1e7ae6"/><rect x="1" y="90" width="1" height="1" fill="#1e7ae6"/><rect x="1" y="93" width="1" height="1" fill="#1e7ae6"/><rect x="1" y="96" width="1" height="1" fill="#1e7ae6"/><rect x="1" y="99" width="1" height="1" fill="#1e7ae6"/><rect x="1" y="102" width="1" height="1" fill="#1e7ae6"/><rect x="1" y="105" width="1" height="1" fill="#1e7ae6"/><rect x="1" y="108" width="1" height="1" fill="#1e7ae6"/><rect x="1" y="111" width="1" height="1" fill="#1e7ae6"/><rect x="1" y="114" width="1" height="1" fill="#1e7ae6"/><rect x="1" y="117" width="1" height="1" fill="#1e7ae6"/><rect x="1" y="120" width="1" height="1" fill="#1e7ae6"/><rect x="1" y="123" width="1" height="1" fill="#1e7ae6"/><rect x="1" y="126" width="1" height="1" fill="#1e7ae6"/><rect x="1" y="129" width="1" height="1" fill="#1e7ae6"/><rect x="1" y="132" width="1" height="1" fill="#1e7ae6"/><rect x="1" y="135" width="1" height="1" fill="#1e7ae6"/><rect x="1" y="138" width="1" height="1" fill="#1e7ae6"/><rect x="1" y="141" width="1" height="1" fill="#1e7ae6"/><rect x="1" y="144" width="1" height="1" fill="#1e7ae6"/><rect x="1" y="147" width="1" height="1" fill="#1e7ae6"/><rect x="1" y="150" width="1" height="1" fill="#1e7ae6"/><rect x="1" y="153" width="1" height="1" fill="#1e7ae6"/><rect x="1" y="156" width="1" height="1" fill="#1e7ae6"/><rect x="1" y="159" width="1" height="1" fill="#1e7ae6"/><rect x="1" y="162" width="1" height="1" fill="#1e7ae6"/><rect x="1" y="165" width="1" height="1" fill="#1e7ae6"/><rect x="1" y="168" width="1" height="1" fill="#1e7ae6"/><rect x="1" y="171" width="1" height="1" fill="#1e7ae6"/><rect x="1" y="174" width="1" height="1" fill="#1e7ae6"/><rect x="1" y="177" width="1" height="1" fill="#1e7ae6"/></svg>
<div class="t" style="left:1200.20px;top:428.98px;font-size:14.2px;color:#666;letter-spacing:0.007px;font-weight:bold;font-style:italic">Für dieses Client Command sind keine Logs verfügbar.</div>
<div class="t" style="left:1165.70px;top:445.98px;font-size:14.2px;color:#666;letter-spacing:0.100px;font-weight:bold;font-style:italic">Entweder wurde dieses Client Command noch auf keinem Client</div>
<div class="t" style="left:1178.20px;top:462.98px;font-size:14.2px;color:#666;letter-spacing:0.178px;font-weight:bold;font-style:italic">ausgeführt oder das Loggen wurde in der Konfiguration des</div>
<div class="t" style="left:1284.90px;top:479.98px;font-size:14.2px;color:#666;letter-spacing:0.116px;font-weight:bold;font-style:italic">Client Commands deaktiviert.</div>
<div class="a" style="left:253px;top:696px;width:148px;height:28px;background:#cccccc;border:1px solid #bfbfbf"></div>
<div class="t" style="left:-173px;width:1000px;text-align:center;top:704.94px;font-size:10.7px;color:#838383;">&lt;-- Erstellen</div>
<div class="a" style="left:962px;top:696px;width:148px;height:28px;background:#cccccc;border:1px solid #bfbfbf"></div>
<div class="t" style="left:536px;width:1000px;text-align:center;top:704.94px;font-size:10.7px;color:#838383;">Synchronisieren --&gt;</div>
<div class="a" style="left:0px;top:735px;width:1637px;height:26px;background:#fff"></div>
<div class="a" style="left:1635px;top:615px;width:2px;height:120px;background:#fff"></div>
<div class="a" style="left:1635px;top:746px;width:2px;height:15px;background:#cfe6fa"></div>
<div class="a" style="left:0px;top:165px;width:2px;height:596px;background:#cfe6fa"></div>
<div class="a" style="left:5px;top:735px;width:1630px;height:1px;background:#cfe6fa"></div>
<div class="a" style="left:5px;top:737px;width:1630px;height:23px;background:#f3f2f1"></div>
<div class="a" style="left:5px;top:737px;width:300px;height:23px;overflow:hidden">
<div class="t" style="left:-0.4px;top:6.64px;font-size:10.7px;color:#000;">© Aagon GmbH 2002 - 2022, all rights reserved</div>
</div>
</body></html>
